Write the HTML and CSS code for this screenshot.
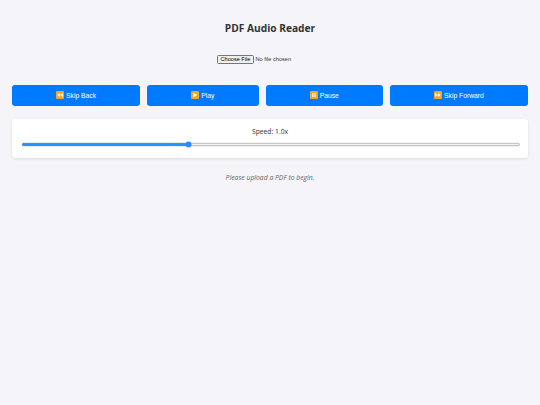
FILE: index.html
```html
<!DOCTYPE html>
<html lang="en">
<head>
  <meta charset="UTF-8">
  <meta name="viewport" content="width=device-width, initial-scale=1.0">
  <title>PDF Audio Reader</title>
  <link rel="stylesheet" href="styles.css">
</head>
<body>
  <h1 class="title">PDF Audio Reader</h1>

  <div class="upload">
    <input type="file" id="pdf-file" accept="application/pdf">
  </div>

  <div class="controls">
    <button class="control-btn">
      <svg class="icon" viewBox="0 0 16 16"><rect width="16" height="16" rx="2" fill="#f5a623"/><path d="M8 4v8L2.500 8zM14 4v8L8.500 8z" fill="#fff"/></svg>
      Skip Back
    </button>
    <button class="control-btn">
      <svg class="icon" viewBox="0 0 16 16"><rect width="16" height="16" rx="2" fill="#f5a623"/><path d="M5 3.500v9L12.500 8z" fill="#fff"/></svg>
      Play
    </button>
    <button class="control-btn">
      <svg class="icon" viewBox="0 0 16 16"><rect width="16" height="16" rx="2" fill="#f5a623"/><path d="M4.500 4h2.500v8H4.500zM9 4h2.500v8H9z" fill="#fff"/></svg>
      Pause
    </button>
    <button class="control-btn">
      <svg class="icon" viewBox="0 0 16 16"><rect width="16" height="16" rx="2" fill="#f5a623"/><path d="M2 4v8l5.500-4zM8 4v8l5.500-4z" fill="#fff"/></svg>
      Skip Forward
    </button>
  </div>

  <div class="speed-card">
    <label class="speed-label" for="speed">Speed: 1.0x</label>
    <input type="range" id="speed" class="speed-slider" min="0.5" max="2" step="0.1" value="1">
  </div>

  <p class="status">Please upload a PDF to begin.</p>
</body>
</html>
```

FILE: styles.css
```css
body {
  font-family: "Open Sans", sans-serif;
  background: #f4f4f9;
  color: #333;
  margin: 0;
  padding: 21px 12px 0;
}

.title {
  font-size: 10.200px;
  line-height: 14px;
  font-weight: 700;
  text-align: center;
  margin: 0 0 20px;
}

.upload {
  display: flex;
  justify-content: center;
  margin-bottom: 21px;
}

.upload input {
  zoom: 0.42;
  font-family: "Liberation Sans", sans-serif;
}

.controls {
  display: flex;
  gap: 7px;
  margin-bottom: 13px;
}

.control-btn {
  flex: 1 1 auto;
  height: 21px;
  padding: 0 8px;
  display: flex;
  align-items: center;
  justify-content: center;
  gap: 2px;
  font-family: "Liberation Sans", sans-serif;
  font-size: 6.750px;
  color: #fff;
  background: #007bff;
  border: none;
  border-radius: 3px;
}

.icon {
  width: 8px;
  height: 8px;
}

.speed-card {
  background: #fff;
  border-radius: 3px;
  box-shadow: 0 1px 3px rgba(0, 0, 0, 0.1);
  padding: 8px;
  height: 39px;
  box-sizing: border-box;
  display: flex;
  flex-direction: column;
  align-items: center;
  gap: 4px;
}

.speed-label {
  font-size: 6.750px;
  line-height: 10px;
}

.speed-slider {
  zoom: 0.42;
  align-self: flex-start;
  width: 100%;
  margin: 0 0 0 2.400px;
  accent-color: #007bff;
  opacity: 0.85;
}

.status {
  font-size: 6.800px;
  line-height: 9px;
  font-style: italic;
  color: #666;
  text-align: center;
  margin: 15px 0 0;
}
```
